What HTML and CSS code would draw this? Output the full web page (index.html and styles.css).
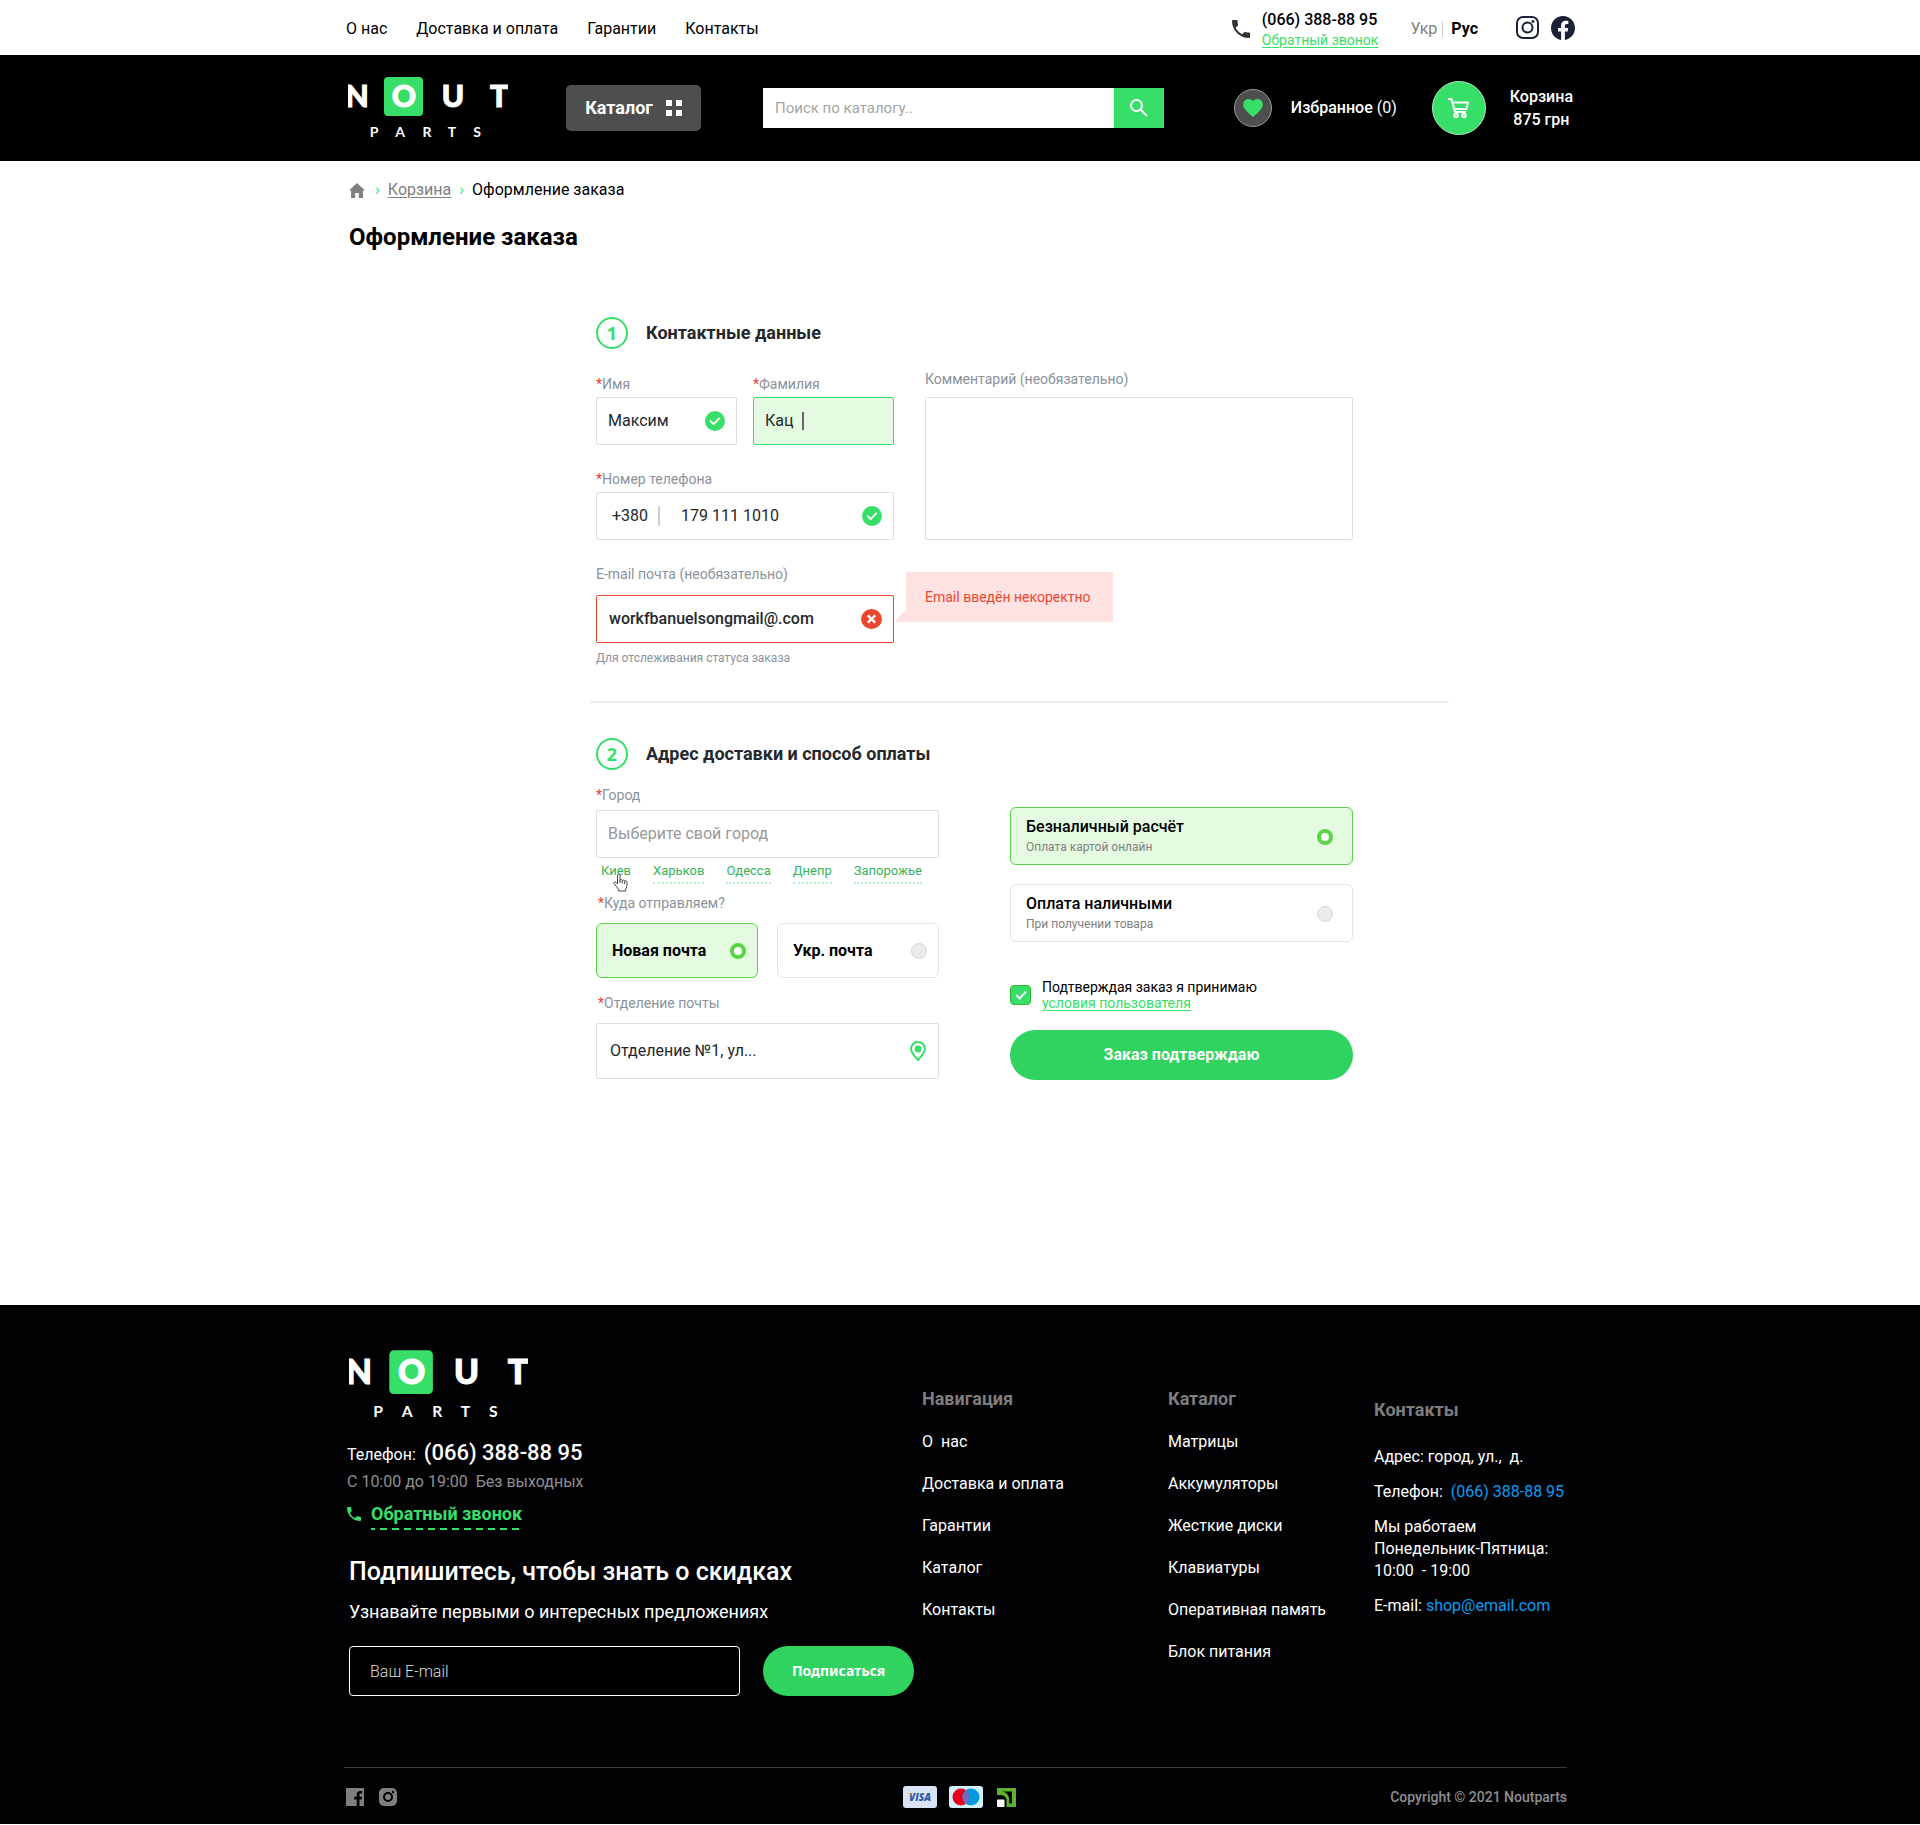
FILE: index.html
```html
<!DOCTYPE html>
<html lang="ru">
<head>
<meta charset="utf-8">
<meta name="viewport" content="width=device-width, initial-scale=1">
<title>Оформление заказа — Nout Parts</title>
<link rel="stylesheet" href="styles.css">
</head>
<body>
<svg class="sprite" aria-hidden="true">
  <symbol id="phone" viewBox="3 3 18 18">
    <path d="M20 15.500c-1.200 0-2.400-.2-3.600-.6-.3-.1-.7 0-1 .2l-2.200 2.200c-2.800-1.400-5.100-3.800-6.600-6.600l2.200-2.200c.3-.3.4-.7.2-1-.3-1.100-.5-2.300-.5-3.500 0-.6-.4-1-1-1H4c-.6 0-1 .4-1 1 0 9.400 7.600 17 17 17 .6 0 1-.4 1-1v-3.500c0-.6-.4-1-1-1z" fill="currentColor"/>
  </symbol>
  <symbol id="check" viewBox="0 0 20 20">
    <circle cx="10" cy="10" r="10" fill="#37df68"/>
    <path d="M5.800 10.300l2.800 2.800 5.600-5.700" fill="none" stroke="#fff" stroke-width="2" stroke-linecap="round" stroke-linejoin="round"/>
  </symbol>
</svg>

<div class="topbar">
  <div class="container topbar__inner">
    <nav class="topbar__nav" aria-label="Основное меню">
      <a href="#">О нас</a>
      <a href="#">Доставка и оплата</a>
      <a href="#">Гарантии</a>
      <a href="#">Контакты</a>
    </nav>
    <div class="topbar__phone">
      <svg class="topbar__phone-icon" width="18" height="18"><use href="#phone"/></svg>
      <div class="topbar__phone-text">
        <a class="topbar__number" href="tel:0663888895">(066) 388-88 95</a>
        <a class="topbar__callback" href="#">Обратный звонок</a>
      </div>
    </div>
    <div class="lang">
      <a class="lang__item" href="#">Укр</a>
      <a class="lang__item lang__item--active" href="#">Рус</a>
    </div>
    <div class="social">
      <a href="#" aria-label="Instagram">
        <svg width="23" height="23" viewBox="0 0 23 23" fill="none" stroke="#1b2236" stroke-width="2">
          <rect x="1" y="1" width="21" height="21" rx="6"/><circle cx="11.500" cy="11.500" r="5"/><circle cx="17" cy="5.500" r="1.400" fill="#1b2236" stroke="none"/>
        </svg>
      </a>
      <a href="#" aria-label="Facebook">
        <svg width="24" height="24" viewBox="0 0 24 24"><path d="M24 12.070C24 5.400 18.600 0 12 0S0 5.400 0 12.070C0 18.100 4.400 23.100 10.130 24v-8.440H7.080v-3.490h3.050V9.410c0-3.020 1.790-4.690 4.530-4.690 1.310 0 2.680.240 2.680.240v2.970h-1.510c-1.490 0-1.960.930-1.960 1.890v2.250h3.330l-.530 3.490h-2.800V24C19.610 23.100 24 18.100 24 12.070z" fill="#1b2236"/></svg>
      </a>
    </div>
  </div>
</div>

<header class="header">
  <div class="container header__inner">
    <a class="header__logo" href="#" aria-label="Nout Parts">
      <svg width="160" height="62" viewBox="0 0 160 62">
        <rect x="36" y="0" width="39" height="39" rx="4" fill="#37df68"/>
        <g class="logo-text logo-text--top"><text x="9" y="30">N</text><text x="56" y="30">O</text><text x="105" y="30">U</text><text x="151" y="30">T</text></g>
        <g class="logo-text logo-text--bottom"><text x="26" y="60">P</text><text x="52" y="60">A</text><text x="79" y="60">R</text><text x="104" y="60">T</text><text x="129" y="60">S</text></g>
      </svg>
    </a>
    <button class="catalog-btn" type="button">Каталог
      <svg width="16" height="16" viewBox="0 0 16 16" fill="#fff"><path d="M0 0h6v6H0zM10 0h6v6h-6zM0 10h6v6H0zM10 10h6v6h-6z"/></svg>
    </button>
    <form class="search" role="search">
      <input class="search__input" type="search" placeholder="Поиск по каталогу.." aria-label="Поиск по каталогу">
      <button class="search__btn" type="submit" aria-label="Найти">
        <svg width="20" height="20" viewBox="0 0 20 20" fill="none" stroke="#fff" stroke-width="2"><circle cx="7.500" cy="7.500" r="5.500"/><path d="M11.500 11.500l6.500 6.500"/></svg>
      </button>
    </form>
    <a class="favorites" href="#">
      <span class="favorites__icon"><svg width="20" height="18" viewBox="2 3 20 18.350"><path d="M12 21.350l-1.450-1.320C5.400 15.360 2 12.280 2 8.500 2 5.420 4.420 3 7.500 3c1.740 0 3.410.810 4.500 2.090C13.090 3.810 14.760 3 16.500 3 19.580 3 22 5.420 22 8.500c0 3.780-3.400 6.860-8.550 11.540z" fill="#37df68"/></svg></span>
      <span><span class="favorites__label">Избранное</span> (0)</span>
    </a>
    <a class="cart" href="#">
      <span class="cart__icon"><svg width="22" height="21" viewBox="0 0 22 21" fill="none" stroke="#fff" stroke-width="2" stroke-linejoin="round"><path d="M0 1h3.500l3.500 13h11"/><path d="M4.500 4.500H20l-1.600 6.500H6.300"/><circle cx="8" cy="17.500" r="1.800"/><circle cx="16" cy="17.500" r="1.800"/></svg></span>
      <span class="cart__text">Корзина<br>875 грн</span>
    </a>
  </div>
</header>

<main class="main container">
  <nav class="breadcrumbs" aria-label="Навигационная цепочка">
    <a class="breadcrumbs__home" href="#" aria-label="Главная"><svg width="16" height="15" viewBox="0 0 16 15" fill="#808080"><path d="M8 0l8 7.500h-2V15H9.800v-5H6.200v5H2V7.500H0z"/></svg></a>
    <span class="breadcrumbs__sep">›</span>
    <a class="breadcrumbs__link" href="#">Корзина</a>
    <span class="breadcrumbs__sep">›</span>
    <span>Оформление заказа</span>
  </nav>
  <h1 class="title">Оформление заказа</h1>

  <form class="checkout">
    <section class="step">
      <h2 class="step__head"><span class="step__num">1</span>Контактные данные</h2>
      <div class="contacts">
        <div class="contacts__left">
          <div class="contacts__names">
            <div class="field">
              <label class="label" for="name"><span class="req">*</span>Имя</label>
              <div class="control">
                <input class="control__input" id="name" type="text" value="Максим">
                <svg class="control__icon" width="20" height="20"><use href="#check"/></svg>
              </div>
            </div>
            <div class="field">
              <label class="label" for="surname"><span class="req">*</span>Фамилия</label>
              <div class="control control--active">
                <input class="control__input control__input--typing" id="surname" type="text" value="Кац">
                <span class="caret"></span>
              </div>
            </div>
          </div>
          <div class="field">
            <label class="label" for="phone-input"><span class="req">*</span>Номер телефона</label>
            <div class="control control--phone">
              <span class="prefix">+380</span>
              <input class="control__input" id="phone-input" type="tel" value="179 111 1010">
              <svg class="control__icon" width="20" height="20"><use href="#check"/></svg>
            </div>
          </div>
          <div class="field field--email">
            <label class="label" for="email">E-mail почта (необязательно)</label>
            <div class="control control--error">
              <input class="control__input" id="email" type="text" value="workfbanuelsongmail@.com" aria-describedby="email-error email-help">
              <svg class="control__icon" width="21" height="20" viewBox="0 0 21 20"><ellipse cx="10.500" cy="10" rx="10.500" ry="10" fill="#e9482f"/><path d="M6.800 6.300l7.400 7.400M14.200 6.300l-7.400 7.400" stroke="#fff" stroke-width="2.400"/></svg>
              <div class="tooltip" id="email-error" role="alert">Email введён некоректно</div>
            </div>
            <p class="help" id="email-help">Для отслеживания статуса заказа</p>
          </div>
        </div>
        <div class="field field--comment">
          <label class="label" for="comment">Комментарий (необязательно)</label>
          <textarea class="textarea" id="comment"></textarea>
        </div>
      </div>
    </section>

    <hr class="divider">

    <section class="step">
      <h2 class="step__head"><span class="step__num">2</span>Адрес доставки и способ оплаты</h2>
      <div class="delivery">
        <div class="delivery__left">
          <label class="label" for="city"><span class="req">*</span>Город</label>
          <div class="control">
            <input class="control__input" id="city" type="text" placeholder="Выберите свой город">
          </div>
          <div class="cities">
            <a class="cities__link cities__link--hover" href="#">Киев
              <svg class="pointer" width="16" height="19" viewBox="0 0 16 19"><path d="M4.500 11V2.200C4.500.6 7 .6 7 2.200v5c.3-1 2.300-.8 2.300.4.400-.9 2.300-.7 2.300.6.500-.8 2.400-.4 2.400.9 0 4-.2 5.400-1.400 7.200v1.700H5.600v-1.500C4.200 14.800 3 12.600 1.200 10.600c-.9-1.100.6-2.200 1.700-1.200z" fill="#fff" stroke="#444" stroke-linejoin="round"/><path d="M7 7v3M9.300 8v2.500M11.600 8.500V11" stroke="#444"/></svg>
            </a>
            <a class="cities__link" href="#">Харьков</a>
            <a class="cities__link" href="#">Одесса</a>
            <a class="cities__link" href="#">Днепр</a>
            <a class="cities__link" href="#">Запорожье</a>
          </div>
          <fieldset class="group">
            <legend class="label label--wide"><span class="req">*</span>Куда отправляем?</legend>
            <div class="posts">
              <label class="option"><span class="option__title option__title--bold">Новая почта</span><input class="radio" type="radio" name="post" checked></label>
              <label class="option"><span class="option__title option__title--bold">Укр. почта</span><input class="radio" type="radio" name="post"></label>
            </div>
          </fieldset>
          <label class="label label--wide" for="branch"><span class="req">*</span>Отделение почты</label>
          <div class="control control--tall">
            <input class="control__input" id="branch" type="text" value="Отделение №1, ул...">
            <svg class="control__icon" width="16" height="20" viewBox="0 0 16 20"><path d="M8 1C4.100 1 1 4.100 1 8c0 3.500 3.300 7 7 11 3.700-4 7-7.500 7-11 0-3.900-3.100-7-7-7z" fill="none" stroke="#37df68" stroke-width="2"/><circle cx="8" cy="8" r="3.400" fill="#37df68"/></svg>
          </div>
        </div>

        <div class="payment">
          <label class="option option--pay">
            <span><span class="option__title">Безналичный расчёт</span><span class="option__note">Оплата картой онлайн</span></span>
            <input class="radio" type="radio" name="pay" checked>
          </label>
          <label class="option option--pay">
            <span><span class="option__title">Оплата наличными</span><span class="option__note">При получении товара</span></span>
            <input class="radio" type="radio" name="pay">
          </label>
          <div class="consent">
            <input class="checkbox" id="consent" type="checkbox" checked>
            <div><label for="consent">Подтверждая заказ я принимаю</label><br><a class="consent__link" href="#">условия пользователя</a></div>
          </div>
          <button class="submit" type="submit">Заказ подтверждаю</button>
        </div>
      </div>
    </section>
  </form>
</main>

<footer class="footer">
  <div class="container">
    <div class="footer__main">
      <div class="footer__about">
        <a class="footer__logo" href="#" aria-label="Nout Parts">
          <svg width="179" height="70" viewBox="0 0 160 62">
            <rect x="36" y="0" width="39" height="39" rx="4" fill="#37df68"/>
            <g class="logo-text logo-text--top"><text x="9" y="30">N</text><text x="56" y="30">O</text><text x="105" y="30">U</text><text x="151" y="30">T</text></g>
            <g class="logo-text logo-text--bottom"><text x="26" y="60">P</text><text x="52" y="60">A</text><text x="79" y="60">R</text><text x="104" y="60">T</text><text x="129" y="60">S</text></g>
          </svg>
        </a>
        <div class="footer__reach">
          <p class="footer__phone">Телефон: <a href="tel:0663888895">(066) 388-88 95</a></p>
          <p class="footer__hours">С 10:00 до 19:00&nbsp; Без выходных</p>
          <div class="footer__callback">
            <svg width="14" height="14"><use href="#phone"/></svg>
            <a href="#">Обратный звонок
              <svg class="dashes" height="2"><line x1="0" y1="1" x2="100%" y2="1" stroke="#37df68" stroke-width="2" stroke-dasharray="7 5" stroke-dashoffset="3"/></svg>
            </a>
          </div>
        </div>
        <h2 class="footer__subtitle">Подпишитесь, чтобы знать о скидках</h2>
        <p class="footer__lead">Узнавайте первыми о интересных предложениях</p>
        <form class="subscribe">
          <input class="subscribe__input" type="email" placeholder="Ваш E-mail" aria-label="Ваш E-mail">
          <button class="subscribe__btn" type="submit">Подписаться</button>
        </form>
      </div>
      <nav class="footer__col" aria-label="Навигация">
        <h3 class="footer__heading">Навигация</h3>
        <a href="#">О&nbsp; нас</a>
        <a href="#">Доставка и оплата</a>
        <a href="#">Гарантии</a>
        <a href="#">Каталог</a>
        <a href="#">Контакты</a>
      </nav>
      <nav class="footer__col" aria-label="Каталог">
        <h3 class="footer__heading">Каталог</h3>
        <a href="#">Матрицы</a>
        <a href="#">Аккумуляторы</a>
        <a href="#">Жесткие диски</a>
        <a href="#">Клавиатуры</a>
        <a href="#">Оперативная память</a>
        <a href="#">Блок питания</a>
      </nav>
      <div class="footer__contacts">
        <h3 class="footer__heading">Контакты</h3>
        <p>Адрес: город, ул.,&nbsp; д.</p>
        <p>Телефон:&nbsp; <a href="tel:0663888895">(066) 388-88 95</a></p>
        <p>Мы работаем<br>Понедельник-Пятница:<br>10:00&nbsp; - 19:00</p>
        <p>E-mail: <a href="mailto:shop@email.com">shop@email.com</a></p>
      </div>
    </div>
    <div class="footer__bottom">
      <div class="footer__social">
        <a href="#" aria-label="Facebook"><svg width="18" height="20" viewBox="0 0 18 20"><path d="M0 1h18v18h-4.500v-6.500h2.200l.4-2.700h-2.600V8c0-.8.400-1.400 1.500-1.400h1.200V4.200c-3.600-.6-5.500.6-5.500 3.500v2.100H8.200v2.700h2.500V19H0z" fill="#7f7f7f"/></svg></a>
        <a href="#" aria-label="Instagram"><svg width="18" height="20" viewBox="0 0 18 20"><rect y="1" width="18" height="18" rx="5" fill="#7f7f7f"/><circle cx="9" cy="10" r="4" fill="none" stroke="#020204" stroke-width="2"/><circle cx="14" cy="5" r="1.200" fill="#020204"/></svg></a>
      </div>
      <div class="footer__pay">
        <svg width="34" height="22" viewBox="0 0 34 22" role="img" aria-label="Visa"><rect width="34" height="22" rx="3" fill="#dbe4f5"/><text class="visa" x="17" y="15">VISA</text><path d="M4 7h3.500l1.200 3C7.700 8.500 6 7.500 4 7.300z" fill="#f2b01e"/></svg>
        <svg width="34" height="22" viewBox="0 0 34 22" role="img" aria-label="Maestro"><rect width="34" height="22" rx="3" fill="#d3f0fc"/><circle cx="12" cy="11" r="8.500" fill="#eb001b"/><circle cx="22" cy="11" r="8.500" fill="#0099df"/><path d="M17 4.130a8.500 8.500 0 0 1 0 13.740a8.500 8.500 0 0 1 0-13.740z" fill="#6c6bbd"/></svg>
        <svg class="footer__privat" width="19" height="19" viewBox="0 0 19 19" role="img" aria-label="Приват24"><path d="M0 0h19v19h-9v-3.500h5V3.500H5.500c4 .8 6.800 4 6.800 8.500V19H9.500v-7C9.500 8.500 6 6.500 0 7z" fill="#5fb030"/><rect y="11.500" width="7.500" height="7.500" rx="1" fill="#fff"/></svg>
      </div>
      <p class="footer__copy">Copyright © 2021 Noutparts</p>
    </div>
  </div>
</footer>
</body>
</html>
```
FILE: styles.css
```css
:root {
  --green: #37df68;
  --green-btn: #30d35f;
  --green-tint: #e4fae1;
  --dark: #24282d;
  --muted: #8a929b;
  --line: #dcdfe0;
}

*, *::before, *::after { box-sizing: border-box; }

body {
  margin: 0;
  background: #fff;
  color: #000;
  font: 400 16px/20px Roboto, "Liberation Sans", sans-serif;
}

h1, h2, h3, p { margin: 0; }
a { color: inherit; text-decoration: none; }
svg { display: block; flex: none; }
input, button, textarea { font: inherit; color: inherit; }
button { border: 0; cursor: pointer; }
fieldset { margin: 0; padding: 0; border: 0; min-width: 0; }
legend { padding: 0; }

.sprite { position: absolute; width: 0; height: 0; }
.container { max-width: 1232px; margin: 0 auto; }

.logo-text { fill: #fff; text-anchor: middle; font-family: Lato, sans-serif; }
.logo-text--top { stroke: #fff; stroke-width: 1px; font-size: 30px; font-weight: 900; }
.logo-text--bottom { font-size: 14px; font-weight: 700; }

/* Top bar */
.topbar__inner { display: flex; align-items: center; min-height: 55px; padding: 2px 1px 0 2px; }
.topbar__nav { display: flex; gap: 29px; }
.topbar__phone { display: flex; align-items: center; gap: 12px; margin-left: auto; }
.topbar__phone-icon { color: #333; }
.topbar__phone-text { display: flex; flex-direction: column; padding-top: 2px; }
.topbar__number { font-weight: 500; }
.topbar__callback { color: var(--green); font-size: 14px; text-decoration: underline; text-underline-offset: 2px; }
.lang { display: flex; margin-left: 32px; line-height: 16px; }
.lang__item { color: #808080; }
.lang__item--active { margin-left: 5px; padding-left: 8px; border-left: 1px solid #ccc; color: #000; font-weight: 700; }
.social { display: flex; align-items: center; gap: 12px; margin-left: 38px; padding-bottom: 2px; }

/* Header */
.header { background: #000; color: #fff; }
.header__inner { display: flex; align-items: center; min-height: 106px; padding: 0 3px 0 4px; }
.catalog-btn {
  display: flex; align-items: center; justify-content: center; gap: 13px;
  width: 135px; height: 46px; margin-left: 58px; padding: 0;
  border-radius: 5px; background: #4e4e4e; color: #fff; font-size: 18px; font-weight: 700;
}
.search { display: flex; flex: 0 1 401px; height: 40px; margin-left: 62px; }
.search__input { flex: 1; min-width: 0; padding: 0 12px; border: 0; border-radius: 0; background: #fff; color: #000; font-size: 15px; appearance: none; outline: 0; }
.search__input::placeholder { color: #a5a5a5; opacity: 1; }
.search__btn { display: grid; place-items: center; width: 50px; padding: 0; background: var(--green); }
.favorites { display: flex; align-items: center; gap: 19px; margin-left: auto; }
.favorites__icon { display: grid; place-items: center; width: 38px; height: 38px; border: 1px solid #999; border-radius: 50%; background: #4e4e4e; }
.favorites__label { font-weight: 500; }
.cart { display: flex; align-items: center; gap: 24px; margin-left: 35px; font-weight: 500; line-height: 23px; text-align: center; }
.cart__icon { display: grid; place-items: center; width: 54px; height: 54px; border: 1px solid #a5f0bb; border-radius: 50%; background: var(--green); }

/* Page heading */
.main { padding: 19px 5px 225px; }
.breadcrumbs { display: flex; align-items: center; gap: 8px; }
.breadcrumbs__home { margin-right: 2px; }
.breadcrumbs__sep { color: var(--green); }
.breadcrumbs__link { color: #808080; text-decoration: underline; text-underline-offset: 2px; }
.title { margin-top: 23px; font-size: 24px; line-height: 28px; font-weight: 700; }

/* Checkout form */
.checkout { max-width: 853px; margin: 66px 0 0 247px; }
.step { max-width: 757px; }
.step__head { display: flex; align-items: center; gap: 18px; color: var(--dark); font-size: 18px; line-height: 32px; font-weight: 700; }
.step__num { display: grid; place-items: center; width: 32px; height: 32px; border: 2px solid var(--green); border-radius: 50%; color: var(--green); font-family: "Noto Sans", sans-serif; line-height: 28px; }
.divider { width: 859px; margin: 35px 0 35px -6px; border: 0; border-top: 2px solid #ededed; }

.contacts { display: grid; grid-template-columns: 298px 1fr; gap: 31px; align-items: start; margin-top: 22px; }
.contacts__left { display: grid; gap: 26px; margin-top: 5px; }
.contacts__names { display: grid; grid-template-columns: 1fr 1fr; gap: 16px; }
.field { display: flex; flex-direction: column; gap: 5px; min-width: 0; }
.field--email { gap: 13px; }
.field--comment { gap: 10px; }

.label { display: block; color: var(--muted); font-size: 14px; line-height: 16px; }
.req { color: #f03a3a; }

.control { position: relative; display: flex; align-items: center; height: 48px; padding: 0 11px; border: 1px solid var(--line); border-radius: 2px; background: #fff; color: var(--dark); }
.control--active { border-color: var(--green); background: var(--green-tint); }
.control--phone { padding-left: 15px; }
.control--error { border-color: #e9482f; padding-left: 12px; font-weight: 500; }
.control--tall { height: 56px; padding: 0 12px 0 13px; }
.control__input { flex: 1; min-width: 0; padding: 0; border: 0; background: none; outline: 0; }
.control__input::placeholder { color: #999; opacity: 1; }
.control__input--typing { flex: 0 0 37px; }
.caret { width: 2px; height: 18px; background: #666; }
.prefix { margin-right: 21px; padding-right: 10px; border-right: 2px solid #ccc; }

.tooltip { position: absolute; left: 309px; top: -24px; width: 207px; padding: 15px 0 15px 19px; background: #ffe2e2; color: #e9482f; font-size: 14px; line-height: 20px; font-weight: 400; white-space: nowrap; }
.tooltip::before { content: ""; position: absolute; right: 100%; bottom: 0; width: 12px; height: 12px; background: inherit; clip-path: polygon(100% 0, 100% 100%, 0 100%); }
.help { margin-top: -6px; color: var(--muted); font-size: 12px; line-height: 16px; }
.textarea { width: 100%; height: 143px; padding: 12px; border: 1px solid var(--line); border-radius: 2px; resize: none; }

.delivery { display: grid; grid-template-columns: 1fr 1fr; gap: 71px; margin-top: 17px; }
.delivery .label { margin-bottom: 7px; }
.delivery .label--wide { margin-bottom: 12px; padding-left: 2px; }
.cities { display: flex; gap: 22px; margin: 5px 0 11px 5px; color: #35b35a; font-size: 13px; line-height: 16px; }
.cities__link { position: relative; padding-bottom: 3px; border-bottom: 2px dotted #b4efc5; }
.cities__link--hover { border-color: transparent; }
.pointer { position: absolute; left: 12px; top: 10px; }
.group { margin-bottom: 17px; }
.posts { display: grid; grid-template-columns: 1fr 1fr; gap: 19px; }

.option { display: flex; align-items: center; justify-content: space-between; height: 55px; padding: 0 11px 0 15px; border: 1px solid #e4e4e4; border-radius: 6px; cursor: pointer; }
.option:has(:checked) { border-color: #57d543; background: var(--green-tint); }
.option--pay { height: 58px; padding-top: 2px; padding-right: 19px; }
.option__title { display: block; font-weight: 500; }
.option__title--bold { font-weight: 700; }
.option__note { display: block; color: #808080; font-size: 12px; }
.radio { appearance: none; flex: none; width: 16px; height: 16px; margin: 0; border: 1px solid #d8d8d8; border-radius: 50%; background: #ebebeb; }
.radio:checked { border: 4px solid #57d543; background: #fff; }

.payment { display: flex; flex-direction: column; gap: 19px; margin-top: 20px; }
.consent { display: flex; align-items: center; gap: 11px; margin-top: 18px; font-size: 14px; line-height: 16px; }
.consent__link { color: var(--green); text-decoration: underline; text-underline-offset: 2px; }
.checkbox { appearance: none; flex: none; display: grid; place-items: center; width: 21px; height: 20px; margin: 0; border: 1px solid #2eb82e; border-radius: 4px; background: var(--green); }
.checkbox:checked::after { content: ""; width: 6px; height: 10px; margin-top: -3px; border: solid #fff; border-width: 0 2px 2px 0; transform: rotate(42deg); }
.submit { height: 50px; border-radius: 25px; background: var(--green-btn); color: #fff; font-weight: 700; }

/* Footer */
.footer { padding: 45px 0 16px; background: #020204; color: #fff; }
.footer__main { display: grid; grid-template-columns: 573px 246px 206px 1fr; align-items: start; padding-left: 5px; }
.footer__reach { margin: 20px 0 0 -2px; }
.footer__phone { display: flex; align-items: baseline; gap: 8px; line-height: 26px; }
.footer__phone a { font-size: 22px; font-weight: 500; }
.footer__hours { margin-top: 4px; color: #8f8f8f; }
.footer__callback { display: flex; align-items: flex-start; gap: 10px; margin-top: 11px; color: var(--green); font-size: 18px; line-height: 22px; font-weight: 700; }
.footer__callback > svg { margin-top: 4px; }
.dashes { width: 0; min-width: 100%; margin-top: 3px; }
.footer__subtitle { margin-top: 28px; font-size: 25px; line-height: 28px; font-weight: 500; }
.footer__lead { margin-top: 15px; font-size: 18px; line-height: 22px; }
.subscribe { display: flex; gap: 23px; margin-top: 23px; }
.subscribe__input { width: 391px; height: 50px; padding: 0 20px; border: 1px solid #fff; border-radius: 4px; background: #000; color: #fff; }
.subscribe__input::placeholder { color: #ddd; font-weight: 300; opacity: 1; }
.subscribe__btn { flex: none; width: 151px; height: 50px; padding: 0; border-radius: 25px; background: var(--green-btn); color: #fff; font-family: "Noto Sans", sans-serif; font-size: 14px; font-weight: 700; }
.footer__heading { color: #7d7d7d; font-size: 18px; line-height: 22px; font-weight: 700; }
.footer__col { display: flex; flex-direction: column; gap: 22px; padding-top: 38px; }
.footer__contacts { display: grid; gap: 13px; padding-top: 49px; line-height: 22px; }
.footer__contacts .footer__heading { margin-bottom: 12px; }
.footer__contacts a { color: #0a9bf5; }
.footer__bottom { display: grid; grid-template-columns: 1fr auto 1fr; align-items: center; max-width: 1223px; margin-top: 71px; padding: 18px 0 0 2px; border-top: 1px solid #3a3a3a; }
.footer__social { display: flex; gap: 15px; }
.footer__pay { display: flex; align-items: center; gap: 12px; padding-left: 5px; }
.footer__privat { margin-left: 2px; }
.footer__copy { color: #8f8f8f; font-size: 14px; line-height: 22px; font-weight: 500; text-align: right; }
.visa { fill: #2a5aa8; font: italic 800 10px "Open Sans", sans-serif; text-anchor: middle; }
```
